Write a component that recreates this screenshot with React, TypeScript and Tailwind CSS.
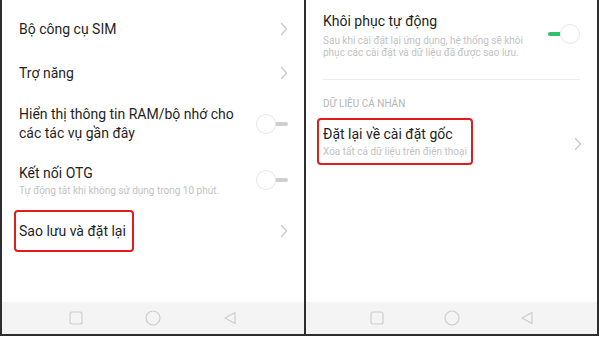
import React from 'react';

const Chevron = () => (
  <svg width="8" height="14" viewBox="0 0 8 14" className="shrink-0">
    <path d="M1.5 1.5 L6.5 7 L1.5 12.5" fill="none" stroke="#c9c9c9" strokeWidth="1.3" strokeLinecap="round" strokeLinejoin="round" />
  </svg>
);

const ToggleOff = () => (
  <div className="flex items-center shrink-0">
    <div className="w-[20px] h-[20px] rounded-full border border-[#e6e6e6] bg-white" />
    <div className="w-[12px] h-[4px] bg-[#cfcfcf] rounded-r-sm" />
  </div>
);

const ToggleOn = () => (
  <div className="flex items-center shrink-0">
    <div className="w-[12px] h-[4px] bg-[#2fc06a] rounded-l-sm" />
    <div className="w-[20px] h-[20px] rounded-full border border-[#e6e6e6] bg-white" />
  </div>
);

const NavBar = ({ gap }: { gap: string }) => (
  <div className={`h-[32px] bg-[#f4f4f4] flex items-center justify-center ${gap}`}>
    <svg width="14" height="14" viewBox="0 0 14 14">
      <rect x="1" y="1" width="12" height="12" rx="2" fill="none" stroke="#cdcdcd" strokeWidth="1.2" />
    </svg>
    <svg width="16" height="16" viewBox="0 0 16 16">
      <circle cx="8" cy="8" r="7" fill="none" stroke="#cdcdcd" strokeWidth="1.2" />
    </svg>
    <svg width="14" height="14" viewBox="0 0 14 14">
      <path d="M12 1.5 L12 12.5 L2 7 Z" fill="none" stroke="#cdcdcd" strokeWidth="1.2" strokeLinejoin="round" />
    </svg>
  </div>
);

export default function App() {
  return (
    <div className="w-[600px] h-[337px] bg-white" style={{ fontFamily: 'Roboto, "Noto Sans", sans-serif' }}>
      <div className="h-[336px] w-[599px] flex border-l-2 border-r-2 border-b-2 border-[#2e2e2e] text-[#1f1f1f]">
        {/* Left panel */}
        <div className="w-[302px] flex flex-col">
          <div className="flex-1 flex flex-col pt-[7px] pl-[17px] pr-[16px]">
            <div className="h-[44px] flex items-center justify-between">
              <span className="text-[14px]">Bộ công cụ SIM</span>
              <Chevron />
            </div>
            <div className="h-[44px] flex items-center justify-between">
              <span className="text-[14px]">Trợ năng</span>
              <Chevron />
            </div>
            <div className="h-[58px] flex items-center justify-between">
              <span className="text-[14px] leading-[19px]">
                Hiển thị thông tin RAM/bộ nhớ cho
                <br />
                các tác vụ gần đây
              </span>
              <ToggleOff />
            </div>
            <div className="h-[50px] flex items-start justify-between pt-[10px]">
              <div className="flex flex-col">
                <span className="text-[14px] leading-[20px]">Kết nối OTG</span>
                <span className="text-[10px] leading-[16px] text-[#c2c2c2]">Tự động tắt khi không sử dụng trong 10 phút.</span>
              </div>
              <div className="pt-[7px]">
                <ToggleOff />
              </div>
            </div>
            <div className="mt-[7px] flex items-center justify-between">
              <div className="ml-[-5px] w-[120px] h-[42px] border-2 border-[#e21b1b] rounded-[4px] flex items-center pl-[3px]">
                <span className="text-[14px]">Sao lưu và đặt lại</span>
              </div>
              <Chevron />
            </div>
          </div>
          <NavBar gap="gap-[62px]" />
        </div>

        {/* Divider */}
        <div className="w-[2px] bg-[#2e2e2e]" />

        {/* Right panel */}
        <div className="flex-1 flex flex-col">
          <div className="flex-1 flex flex-col pl-[17px] pr-[17px] pt-[11px]">
            <div className="flex items-start justify-between">
              <div className="flex flex-col">
                <span className="text-[14px] leading-[20px]">Khôi phục tự động</span>
                <span className="text-[10px] leading-[12px] text-[#c2c2c2] mt-[4px]">
                  Sau khi cài đặt lại ứng dụng, hệ thống sẽ khôi
                  <br />
                  phục các cài đặt và dữ liệu đã được sao lưu.
                </span>
              </div>
              <div className="pt-[13px]">
                <ToggleOn />
              </div>
            </div>
            <div className="mt-[20px] h-px bg-[#ececec]" />
            <div className="mt-[18px] text-[10px] leading-[12px] text-[#b5b5b5]">DỮ LIỆU CÁ NHÂN</div>
            <div className="mt-[8px] flex items-center justify-between">
              <div className="ml-[-6px] w-[156px] h-[47px] border-2 border-[#e21b1b] rounded-[4px] flex flex-col justify-center pl-[4px]">
                <span className="text-[14px] leading-[19px]">Đặt lại về cài đặt gốc</span>
                <span className="text-[10px] leading-[15px] text-[#c2c2c2]">Xóa tất cả dữ liệu trên điện thoại</span>
              </div>
              <div className="mr-[-2px] mt-[4px]">
                <Chevron />
              </div>
            </div>
          </div>
          <NavBar gap="gap-[60px]" />
        </div>
      </div>
    </div>
  );
}
